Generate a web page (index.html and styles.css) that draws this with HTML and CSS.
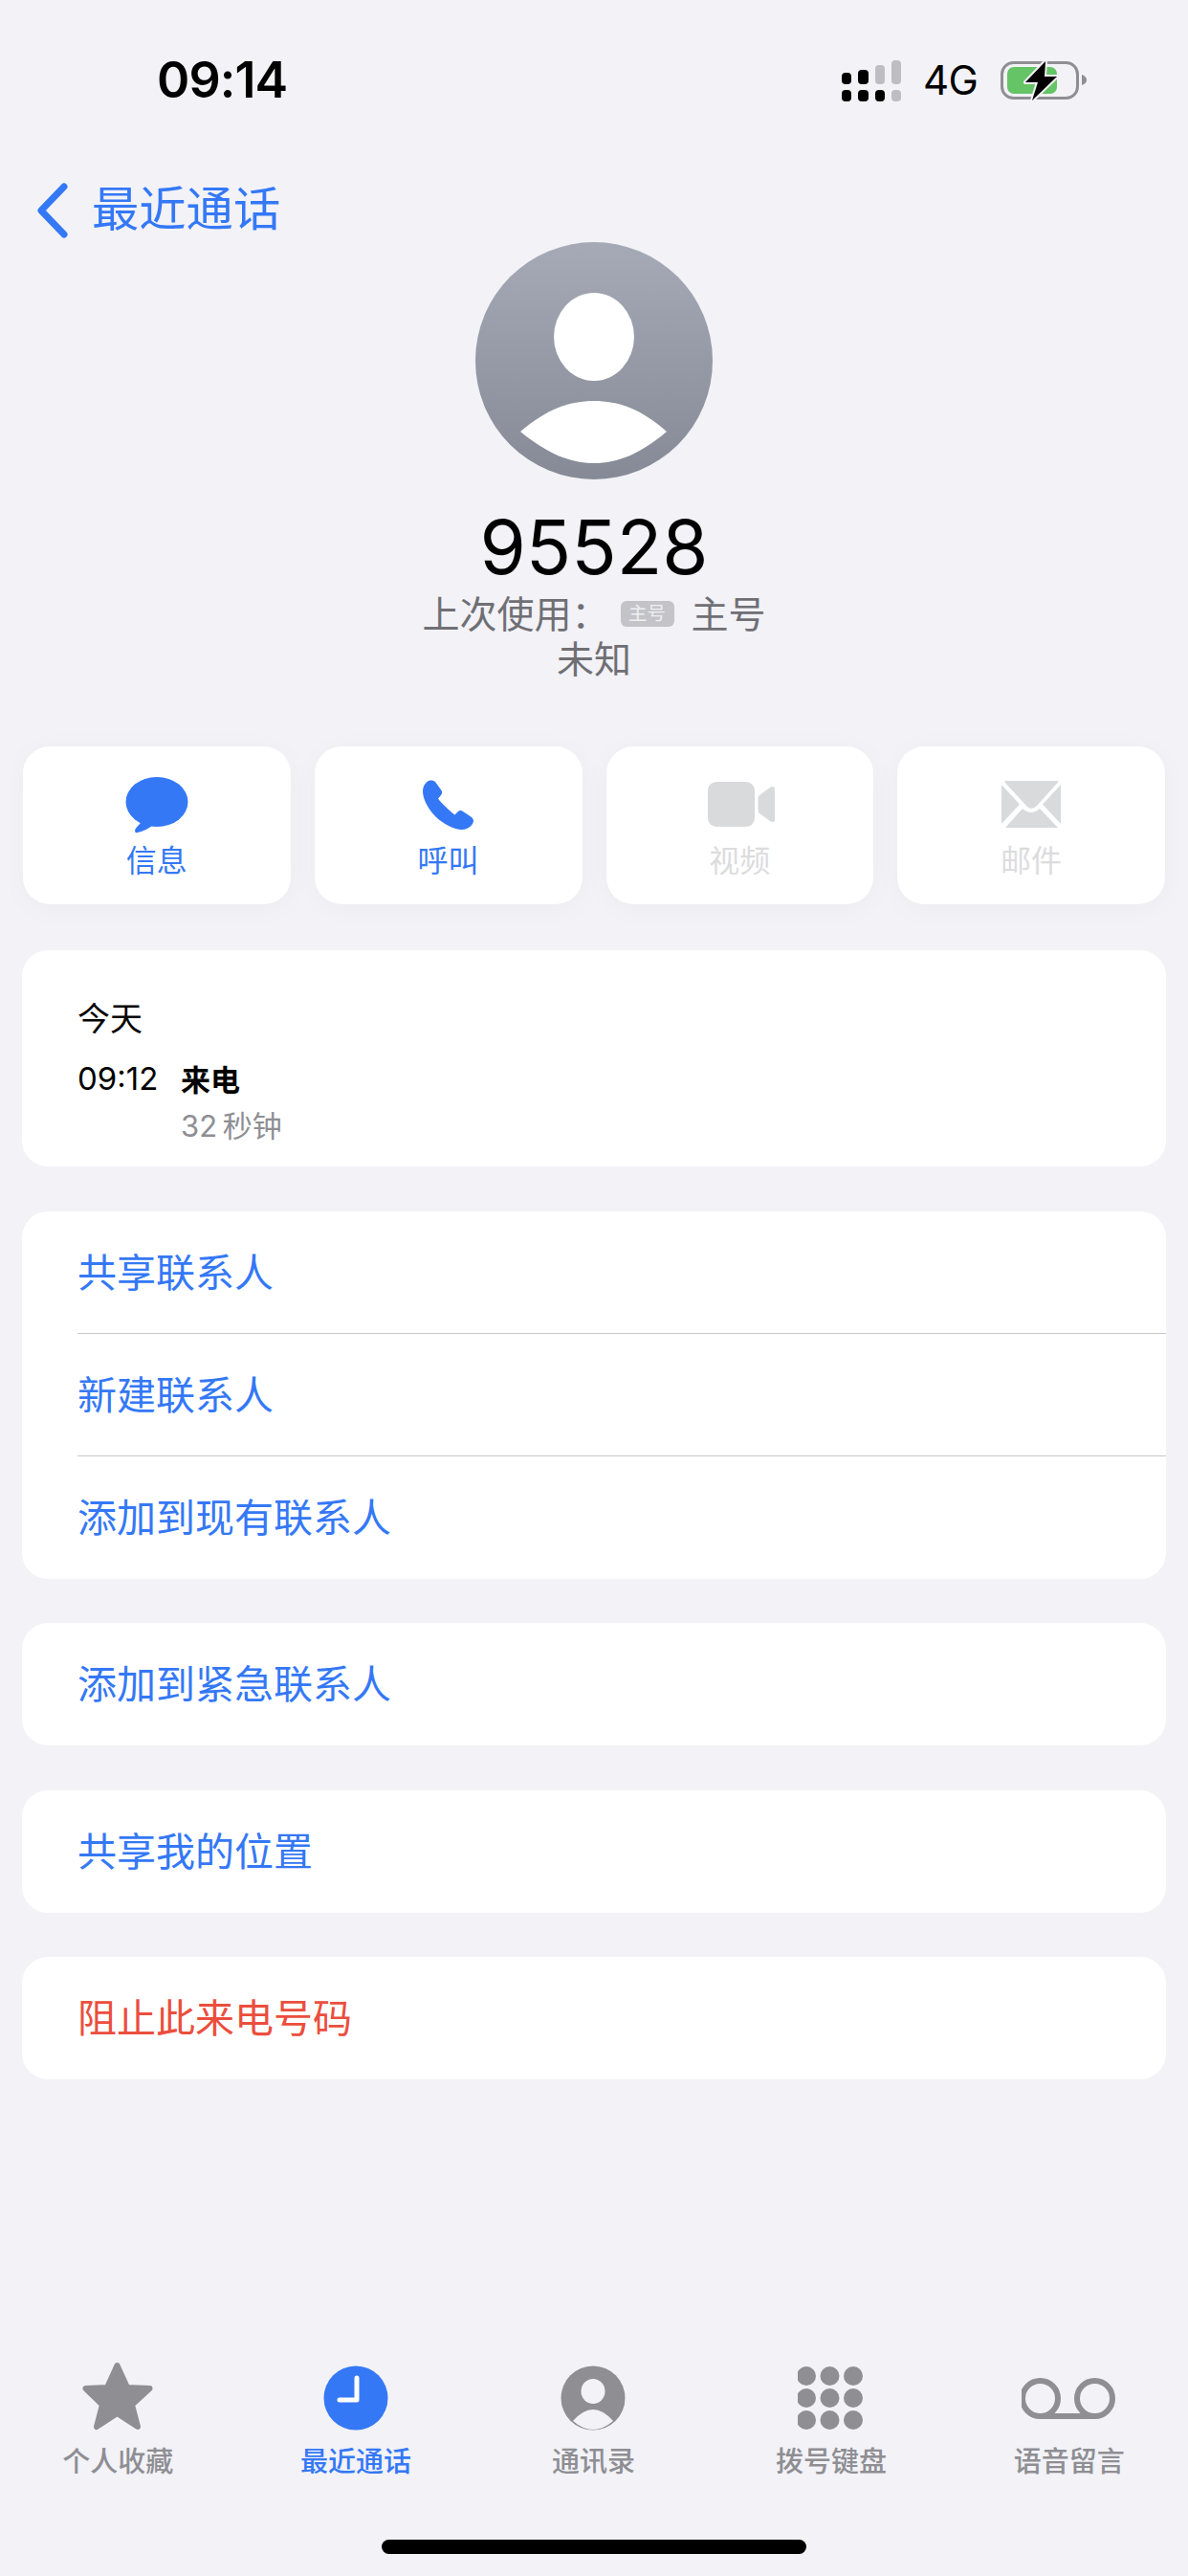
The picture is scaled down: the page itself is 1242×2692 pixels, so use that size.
FILE: index.html
```html
<!DOCTYPE html>
<html lang="zh-CN">
<head>
<meta charset="utf-8">
<title>95528</title>
<link rel="stylesheet" href="styles.css">
</head>
<body>
<div class="page">
  <header class="status">
    <span class="clock">09:14</span>
    <div class="status-right">
      <svg class="signal" viewBox="0 0 62 46" width="62" height="46">
        <rect class="on" x="0" y="15" width="10" height="12" rx="4"/>
        <rect class="on" x="17" y="12" width="11" height="15" rx="4"/>
        <rect class="off" x="35" y="7" width="10" height="20" rx="4"/>
        <rect class="off" x="52" y="2" width="10" height="25" rx="4"/>
        <rect class="on" x="0" y="33" width="10" height="12" rx="4"/>
        <rect class="on" x="17" y="33" width="11" height="12" rx="4"/>
        <rect class="on" x="35" y="33" width="10" height="12" rx="4"/>
        <rect class="off" x="52" y="33" width="10" height="12" rx="4"/>
      </svg>
      <span class="net">4G</span>
      <svg class="battery" viewBox="0 0 90 46" width="90" height="46">
        <rect class="batt-line" x="1.5" y="4.5" width="79" height="37" rx="12"/>
        <rect class="batt-fill" x="7" y="9" width="52" height="28" rx="7"/>
        <path class="batt-nub" d="M85 17 Q90 19 90 22.5 Q90 26 85 28 Z"/>
        <path class="batt-bolt" d="M47 3 L26 25 L39 25 L33 44 L59 19 L46 19 Z"/>
      </svg>
    </div>
  </header>

  <nav class="back">
    <svg class="chevron" viewBox="0 0 34 58" width="34" height="58"><polyline points="29,4 5,29 29,54"/></svg>
    <span class="back-text">最近通话</span>
  </nav>

  <section class="profile">
    <svg class="avatar" viewBox="0 0 248 248" width="248" height="248">
      <defs>
        <linearGradient id="avatarGrad" x1="0" y1="0" x2="0" y2="1">
          <stop offset="0" stop-color="#a6aab7"/>
          <stop offset="1" stop-color="#858a96"/>
        </linearGradient>
      </defs>
      <circle cx="124" cy="124" r="124" fill="url(#avatarGrad)"/>
      <ellipse class="avatar-fg" cx="124" cy="99" rx="42" ry="46"/>
      <path class="avatar-fg" d="M47 198 C75 174 99 166 124 166 C149 166 173 174 200 198 C173 221 149 231 124 231 C99 231 75 221 47 198 Z"/>
    </svg>
    <h1 class="name">95528</h1>
    <div class="sub">上次使用：<span class="badge">主号</span><span class="sub-sim">主号</span></div>
    <div class="sub">未知</div>
  </section>

  <section class="actions">
    <div class="action">
      <svg class="action-icon" viewBox="0 0 66 60" width="66" height="60">
        <ellipse cx="33" cy="26" rx="32.5" ry="26"/>
        <path d="M14 40 L16 48 Q10 54 10 56 Q10 59 13 58 Q22 56 29 50 Z"/>
      </svg>
      <span class="action-label">信息</span>
    </div>
    <div class="action">
      <svg class="action-icon" viewBox="0 0 58 60" width="58" height="60">
        <path d="M10 3.5 C7 3.5 2 8 2 15 C2 22 7 33 15 41 C23 49 35 55 43 55 C50 55 55 49 55 46 C55 44 54 43 53 42 L44 36 C42 34.5 40 35 38.5 36.5 L35.5 39.5 C32 37 21 27 18 22.5 L21 19 C22.5 17.5 22.5 15.5 21.5 14 L15 5 C13.5 3.5 12 3.5 10 3.5 Z"/>
      </svg>
      <span class="action-label">呼叫</span>
    </div>
    <div class="action is-off">
      <svg class="action-icon video-icon" viewBox="0 0 72 60" width="72" height="60">
        <rect x="1" y="5" width="49" height="47" rx="9"/>
        <path d="M53.5 23 Q53.5 20 55 19 L66 11 Q71 8 71 13 L71 44 Q71 49 66 46 L55 38 Q53.5 37 53.5 34 Z"/>
      </svg>
      <span class="action-label">视频</span>
    </div>
    <div class="action is-off">
      <svg class="action-icon" viewBox="0 0 64 60" width="64" height="60">
        <path d="M5 4 H60 Q61 4 60 5.5 L38 30 Q32 36 27 30 L4.5 5.5 Q4 4 5 4 Z"/>
        <path d="M1 8 L20 28.5 L1 49 Z"/>
        <path d="M63 8 L44 28.5 L63 49 Z"/>
        <path d="M5 53 L23 33 Q32 41 41 33 L60 53 Z"/>
      </svg>
      <span class="action-label">邮件</span>
    </div>
  </section>

  <section class="card call">
    <div class="call-day">今天</div>
    <div class="call-grid">
      <span class="call-time">09:12</span>
      <span class="call-kind">来电</span>
      <span class="call-len">32 秒钟</span>
    </div>
  </section>

  <div class="stack">
    <section class="card">
      <div class="row"><span class="row-text">共享联系人</span></div>
      <div class="row"><span class="row-text">新建联系人</span></div>
      <div class="row"><span class="row-text">添加到现有联系人</span></div>
    </section>
    <section class="card">
      <div class="row"><span class="row-text">添加到紧急联系人</span></div>
    </section>
    <section class="card">
      <div class="row"><span class="row-text">共享我的位置</span></div>
    </section>
    <section class="card">
      <div class="row"><span class="row-text danger">阻止此来电号码</span></div>
    </section>
  </div>

  <footer class="tabs">
    <div class="tab">
      <svg class="tab-icon" viewBox="0 0 80 72" width="80" height="72">
        <polygon class="star" points="39.5,4 50,27 73.5,28 55,45 61,68 39.5,54 18,68 24,45 6.5,28 29,27"/>
      </svg>
      <span class="tab-label">个人收藏</span>
    </div>
    <div class="tab is-active">
      <svg class="tab-icon" viewBox="0 0 68 72" width="68" height="72">
        <circle cx="34" cy="38" r="33.5"/>
        <polyline class="hands" points="35,17 35,40 17,40"/>
      </svg>
      <span class="tab-label">最近通话</span>
    </div>
    <div class="tab">
      <svg class="tab-icon" viewBox="0 0 68 72" width="68" height="72">
        <circle cx="34" cy="38" r="33.5"/>
        <ellipse class="hole" cx="34" cy="31" rx="12.5" ry="13"/>
        <path class="hole" d="M13 62 Q34 38 55 62 Q34 80 13 62 Z"/>
      </svg>
      <span class="tab-label">通讯录</span>
    </div>
    <div class="tab">
      <svg class="tab-icon" viewBox="1.5 0 70 72" width="70" height="72">
        <circle cx="10.5" cy="15" r="10"/><circle cx="35" cy="15" r="10"/><circle cx="59.5" cy="15" r="10"/>
        <circle cx="10.5" cy="38" r="10"/><circle cx="35" cy="38" r="10"/><circle cx="59.5" cy="38" r="10"/>
        <circle cx="10.5" cy="61" r="10"/><circle cx="35" cy="61" r="10"/><circle cx="59.5" cy="61" r="10"/>
      </svg>
      <span class="tab-label">拨号键盘</span>
    </div>
    <div class="tab">
      <svg class="tab-icon" viewBox="2 0 100 72" width="100" height="72">
        <circle class="vm" cx="21.5" cy="38.5" r="18.5"/>
        <circle class="vm" cx="78.5" cy="38.5" r="18.5"/>
        <line class="vm" x1="21.5" y1="57" x2="78.5" y2="57"/>
      </svg>
      <span class="tab-label">语音留言</span>
    </div>
  </footer>
  <div class="home"><div class="home-bar"></div></div>
</div>
</body>
</html>
```
FILE: styles.css
```css
* { box-sizing: border-box; }
html, body { margin: 0; padding: 0; }
body {
  background: #f2f2f7;
  color: #000;
  font-family: Inter, "Noto Sans CJK SC", sans-serif;
}
.page {
  width: 1242px;
  height: 2692px;
  display: flex;
  flex-direction: column;
  overflow: hidden;
}

/* status bar */
.status {
  height: 168px;
  flex: none;
  display: flex;
  align-items: center;
  justify-content: space-between;
  padding: 0 106px 0 164px;
}
.clock { font-size: 52px; font-weight: 600; letter-spacing: -0.9px; line-height: 60px; }
.status-right { display: flex; align-items: center; gap: 24px; }
.signal .on { fill: #000; }
.signal .off { fill: #bdbdc2; }
.net { font-size: 42px; font-weight: 400; line-height: 46px; width: 56px; letter-spacing: -0.6px; margin-left: -1px; margin-right: 1px; }
.batt-line { fill: none; stroke: #8e8e93; stroke-width: 3; }
.batt-fill { fill: #65c466; }
.batt-nub { fill: #8e8e93; }
.batt-bolt { fill: #000; stroke: #f2f2f7; stroke-width: 4; paint-order: stroke; stroke-linejoin: round; }

/* back link */
.back {
  height: 85px;
  flex: none;
  padding: 18px 0 0 38px;
  display: flex;
  align-items: center;
  gap: 24px;
  color: #3478f6;
}
.chevron polyline { fill: none; stroke: #3478f6; stroke-width: 7; stroke-linecap: round; stroke-linejoin: round; }
.back-text { font-size: 49.3px; line-height: 60px; margin-bottom: 3px; }

/* profile */
.profile { display: flex; flex-direction: column; align-items: center; flex: none; }
.avatar { display: block; }
.avatar-fg { fill: #fff; }
.name { margin: 31px 0 6px; font-size: 78px; font-weight: 400; line-height: 80px; }
.sub { font-size: 39px; line-height: 47px; color: #6f6f74; display: flex; align-items: center; }
.badge {
  width: 56px;
  height: 27px;
  margin-left: 12px;
  border-radius: 6px;
  background: #c3c3c8;
  color: #efeff3;
  font-size: 19.5px;
  line-height: 27px;
  text-align: center;
}
.sub-sim { margin-left: 18px; }

/* action buttons */
.actions {
  flex: none;
  margin-top: 68px;
  padding: 0 24px;
  display: grid;
  grid-template-columns: repeat(4, 1fr);
  gap: 25px;
}
.action {
  height: 165px;
  padding-top: 32px;
  background: #fff;
  border-radius: 28px;
  box-shadow: 0 4px 30px rgba(0, 0, 0, 0.03);
  display: flex;
  flex-direction: column;
  align-items: center;
  color: #3478f6;
}
.action-icon { display: block; fill: #3478f6; }
.video-icon { margin-left: 4px; }
.action-label { margin-top: 8px; font-size: 32px; line-height: 40px; }
.is-off { color: #dcdcde; }
.is-off .action-icon { fill: #d9dadc; }

/* cards */
.card {
  background: #fff;
  border-radius: 27px;
  margin: 0 23px;
  flex: none;
}
.call { margin-top: 48px; height: 226px; padding: 50px 0 0 58px; }
.call-day { font-size: 34px; line-height: 44px; }
.call-grid {
  margin-top: 18px;
  display: grid;
  grid-template-columns: 108px auto;
  justify-content: start;
  row-gap: 6px;
}
.call-time { font-size: 33px; line-height: 44px; }
.call-kind { margin-top: 2px; font-size: 31px; font-weight: 700; line-height: 44px; }
.call-len { grid-column: 2; font-size: 31px; line-height: 40px; color: #8e8e93; word-spacing: -3px; }

.stack { margin-top: 47px; display: flex; flex-direction: column; gap: 46.4px; flex: none; }
.row {
  height: 128px;
  margin-left: 58px;
  display: flex;
  align-items: center;
}
.row:not(:last-child) { border-bottom: 1.5px solid #c9c9cc; }
.row-text { font-size: 41px; line-height: 60px; color: #3478f6; }
.danger { color: #eb4e3d; }

/* tab bar */
.tabs {
  margin-top: auto;
  margin-left: -1px;
  width: 1243px;
  flex: none;
  display: grid;
  grid-template-columns: repeat(5, 1fr);
}
.tab { display: flex; flex-direction: column; align-items: center; color: #8e8e93; }
.tab-icon { display: block; fill: #8e8e93; }
.tab-label { margin-top: 13px; font-size: 29px; font-weight: 500; line-height: 40px; }
.star { stroke: #8e8e93; stroke-width: 6; stroke-linejoin: round; }
.is-active { color: #3478f6; }
.is-active .tab-icon { fill: #3478f6; }
.hands { fill: none; stroke: #fff; stroke-width: 5; stroke-linecap: round; stroke-linejoin: round; }
.hole { fill: #f2f2f7; }
.vm { fill: none; stroke: #8e8e93; stroke-width: 6; }

.home { height: 99px; flex: none; padding-top: 61px; }
.home-bar { width: 444px; height: 15px; margin: 0 auto; border-radius: 8px; background: #000; }
```
